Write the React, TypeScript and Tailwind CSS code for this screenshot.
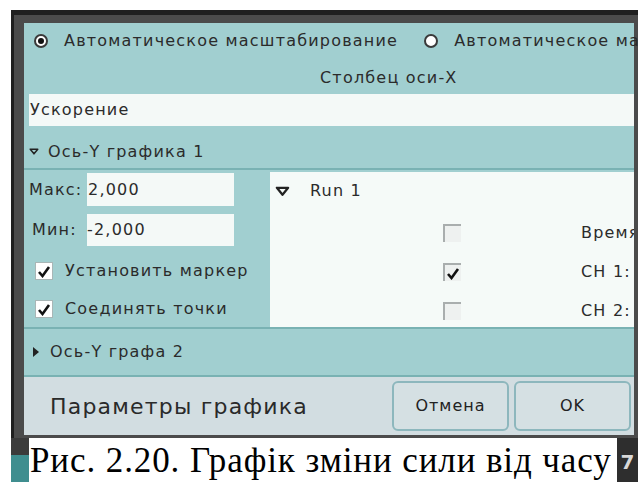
import React from 'react';

const ui = { fontFamily: '"DejaVu Sans", Verdana, sans-serif' };
const serif = { fontFamily: '"Liberation Serif", "Times New Roman", serif' };

const Radio: React.FC<{ on?: boolean }> = ({ on }) => (
  <span className="flex h-[14px] w-[14px] shrink-0 items-center justify-center rounded-full border-[2px] border-[#3a3a3a] bg-white">
    {on && <span className="h-[6px] w-[6px] rounded-full bg-[#111]" />}
  </span>
);

const Check: React.FC<{ on?: boolean; flat?: boolean }> = ({ on, flat }) => (
  <span
    className={
      flat
        ? 'flex h-[18px] w-[18px] shrink-0 items-center justify-center border-l-2 border-t-2 border-[#a9aeae] bg-[#eef1f0]'
        : 'flex h-[18px] w-[18px] shrink-0 items-center justify-center border border-[#a9b6b6] bg-white'
    }
  >
    {on && (
      <svg width="14" height="14" viewBox="0 0 14 14">
        <path d="M2 8 L5.5 12 L12 3" fill="none" stroke="#111" strokeWidth="2.6" />
      </svg>
    )}
  </span>
);

const DownTri: React.FC<{ size?: number }> = ({ size = 11 }) => (
  <svg width={size} height={size * 0.7} viewBox="0 0 12 8">
    <path d="M1.5 1.2 H10.5 L6 6.8 Z" fill="none" stroke="#222" strokeWidth="1.8" strokeLinejoin="round" />
  </svg>
);

export default function App() {
  return (
    <div className="relative h-[482px] w-[638px] overflow-hidden bg-white" style={ui}>
      {/* window frame */}
      <div className="ml-[11px] mt-[10px] h-[472px] border-l-[3px] border-t-[5px] border-[#1f1f1f] bg-[#4b4b4b] pl-[10px] pt-[8px] pr-[4px]">
        <div className="flex h-[412px] flex-col bg-[#a1cfd0] text-[16px] tracking-[1.2px] text-[#2b2b2b]">
          {/* scaling mode */}
          <div className="flex h-[35px] shrink-0 items-center whitespace-nowrap pl-[10px]">
            <Radio on />
            <span className="ml-[16px]">Автоматическое масштабирование</span>
            <span className="ml-[26px]">
              <Radio />
            </span>
            <span className="ml-[16px]">Автоматическое масштабирование</span>
          </div>
          <div className="flex h-[36px] shrink-0 items-center whitespace-nowrap pl-[296px] pt-[4px]">Столбец оси-X</div>
          <div className="ml-[5px] flex h-[32px] shrink-0 items-center bg-[#f4f9f7] pl-[1px]">Ускорение</div>

          {/* axis 1 */}
          <div className="flex h-[44px] shrink-0 items-center gap-[9px] border-b-2 border-[#79b2b3] pl-[5px] pt-[9px]">
            <DownTri size={10} />
            <span>Ось-Y графика 1</span>
          </div>
          <div className="flex h-[159px] shrink-0 border-b-2 border-[#79b2b3]">
            <div className="flex w-[245px] shrink-0 flex-col pl-[5px] pt-[3px]">
              <div className="flex h-[33px] items-center">
                <span className="w-[58px]">Макс:</span>
                <span className="flex h-[33px] w-[147px] items-center bg-[#f4f9f7] pl-[1px]">2,000</span>
              </div>
              <div className="mt-[8px] flex h-[32px] items-center">
                <span className="w-[58px] pl-[3px]">Мин:</span>
                <span className="flex h-[32px] w-[147px] items-center bg-[#f4f9f7]">-2,000</span>
              </div>
              <div className="mt-[7px] flex h-[36px] items-center gap-[12px] pl-[6px]">
                <Check on />
                <span>Установить маркер</span>
              </div>
              <div className="mt-[2px] flex h-[38px] items-center gap-[12px] pl-[6px]">
                <Check on />
                <span>Соединять точки</span>
              </div>
            </div>
            <div className="ml-[1px] mt-[2px] flex flex-1 flex-col overflow-hidden bg-[#f5faf8]">
              <div className="flex h-[38px] shrink-0 items-center gap-[20px] pl-[5px]">
                <DownTri size={15} />
                <span>Run 1</span>
              </div>
              <div className="flex flex-col pt-[3px]">
                {[
                  { on: false, label: 'Время' },
                  { on: true, label: 'CH 1:' },
                  { on: false, label: 'CH 2:' },
                ].map((r) => (
                  <div key={r.label} className="flex h-[39px] shrink-0 items-center whitespace-nowrap">
                    <span className="ml-[173px]">
                      <Check flat on={r.on} />
                    </span>
                    <span className="ml-[120px]">{r.label}</span>
                  </div>
                ))}
              </div>
            </div>
          </div>

          {/* axis 2 */}
          <div className="flex h-[48px] shrink-0 items-center gap-[10px] border-b-2 border-[#79b2b3] pl-[8px]">
            <svg width="8" height="12" viewBox="0 0 8 12">
              <path d="M1 1 L7 6 L1 11 Z" fill="#222" />
            </svg>
            <span>Ось-Y графа 2</span>
          </div>

          {/* footer */}
          <div className="flex flex-1 items-center bg-[#d2dde1] pl-[26px] pr-[3px]">
            <span className="flex-1 text-[22px] tracking-[1.2px] text-[#2a2a2a]">Параметры графика</span>
            <button className="h-[50px] w-[117px] rounded-[6px] border-2 border-[#8db7bd] bg-[#d5e0e3] text-[16px] tracking-[1px] text-[#222]">
              Отмена
            </button>
            <button className="ml-[5px] h-[50px] w-[117px] rounded-[6px] border-2 border-[#8db7bd] bg-[#d5e0e3] text-[16px] tracking-[1px] text-[#222]">
              OK
            </button>
          </div>
        </div>
      </div>

      {/* figure caption over the frame */}
      <div className="absolute left-0 top-[435px] flex h-[47px] w-[638px] items-start">
        <div className="mt-[3px] h-[44px] w-[18px] ml-[11px] bg-[#3b3b3b]">
          <div className="mt-[17px] h-[27px] bg-[#3f8e8f]" />
        </div>
        <div className="mt-[3px] flex h-[44px] w-[588px] items-center whitespace-nowrap bg-white pl-[1px] text-[35px] leading-none tracking-[0.9px] text-black" style={serif}>
          Рис. 2.20. Графік зміни сили від часу
        </div>
        <div className="mt-[3px] flex h-[44px] flex-1 items-end justify-center bg-[#2e2e2e] pb-[5px] text-[20px] font-bold text-[#d8d8d8]">
          7
        </div>
      </div>
    </div>
  );
}
